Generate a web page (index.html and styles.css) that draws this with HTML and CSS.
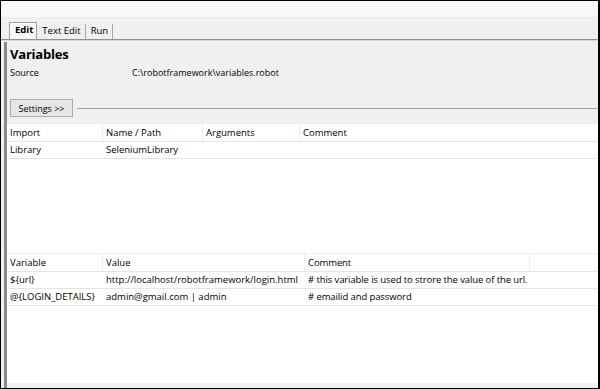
FILE: index.html
```html
<!DOCTYPE html>
<html>
<head>
<meta charset="utf-8">
<link rel="stylesheet" href="styles.css">
</head>
<body>
<div class="frame">
  <div class="topstrip"></div>
  <div class="tabbar">
    <div class="tab active">Edit</div>
    <div class="tab">Text Edit</div>
    <div class="tab">Run</div>
  </div>
  <div class="panel">
    <div class="editor">
      <div class="head">
        <div class="title">Variables</div>
        <div class="source"><span class="lbl">Source</span><span class="path">C:\robotframework\variables.robot</span></div>
        <div class="settings"><button class="btn">Settings &gt;&gt;</button><div class="rule"></div></div>
      </div>
      <div class="grid imports">
        <div class="row hdr">
          <div class="c c1">Import</div><div class="c c2">Name / Path</div><div class="c c3">Arguments</div><div class="c rest">Comment</div>
        </div>
        <div class="row">
          <div class="c c1">Library</div><div class="c c2">SeleniumLibrary</div><div class="c c3"></div><div class="c rest"></div>
        </div>
      </div>
      <div class="gap"></div>
      <div class="grid vars">
        <div class="row hdr">
          <div class="c v1">Variable</div><div class="c v2">Value</div><div class="c v3">Comment</div><div class="c rest"></div>
        </div>
        <div class="row">
          <div class="c v1">${url}</div><div class="c v2">http://localhost/robotframework/login.html</div><div class="c v3"># this variable is used to strore the value of the url.</div><div class="c rest"></div>
        </div>
        <div class="row">
          <div class="c v1">@{LOGIN_DETAILS}</div><div class="c v2">admin@gmail.com | admin</div><div class="c v3"># emailid and password</div><div class="c rest"></div>
        </div>
      </div>
      <div class="fill"></div>
      <div class="foot"></div>
    </div>
  </div>
</div>
</body>
</html>
```

FILE: styles.css
```css
html, body { margin: 0; padding: 0; }
body { width: 600px; height: 389px; overflow: hidden; background: #fff; font-family: "Open Sans", "Noto Sans", sans-serif; font-size: 10px; color: #000; }
.frame { box-sizing: border-box; width: 600px; height: 389px; border: 1px solid #000; border-right-width: 2px; display: flex; flex-direction: column; background: #f0f0f0; }
.topstrip { height: 16px; background: #f8f8f8; border-bottom: 1px solid #ececec; }
.tabbar { height: 21px; display: flex; align-items: flex-end; padding-left: 8px; background: #f0f0f0; }
.tab { height: 15px; line-height: 14px; padding: 0 4px 0 5px; border-right: 1px solid #a8a8a8; font-size: 9.5px; color: #000; }
.tab.active { font-weight: bold; background: #f8f8f8; border: 1px solid #a0a0a0; border-bottom: none; height: 16px; padding: 0 3px 0 5px; }
.panel { flex: 1; display: flex; border-top: 1px solid #909090; box-shadow: inset 0 1px 0 #d8d8d8; padding-top: 2px; }
.editor { flex: 1; display: flex; flex-direction: column; margin-left: 3px; border-left: 3px solid #8a8a8a; background: #fff; }
.head { background: #f0f0f0; padding: 3px 0 5px 3px; }
.title { font-size: 13px; font-weight: bold; height: 18px; line-height: 18px; letter-spacing: -0.2px; }
.source { display: flex; height: 16px; line-height: 16px; margin-top: 2px; font-size: 9px; }
.lbl { width: 122px; }
.settings { display: flex; align-items: center; margin-top: 17px; height: 20px; }
.btn { height: 18px; width: 63px; padding: 0; font-family: inherit; font-size: 9px; background: #e6e6e6; border: 1px solid #adadad; color: #000; }
.rule { flex: 1; height: 1px; background: #a0a0a0; margin-left: 4px; }
.grid { background: #fff; }
.row { display: flex; height: 16px; border-bottom: 1px solid #e4e4e4; line-height: 16px; font-size: 9.5px; }
.row.hdr { height: 17px; line-height: 17px; border-top: 1px solid #ececec; }
.c { box-sizing: border-box; padding-left: 3px; white-space: nowrap; overflow: hidden; }
.hdr .c { border-right: 1px solid #ececec; }
.hdr .c.rest { border-right: none; }
.imports .c1 { width: 96px; }
.imports .c2 { width: 100px; }
.imports .c3 { width: 97px; }
.vars .v1 { width: 96px; }
.vars .v2 { width: 202px; }
.vars .v3 { width: 225px; overflow: visible; letter-spacing: -0.1px; }
.rest { flex: 1; }
.gap { height: 94px; }
.fill { flex: 1; }
.foot { height: 5px; background: #f0f0f0; }
```
